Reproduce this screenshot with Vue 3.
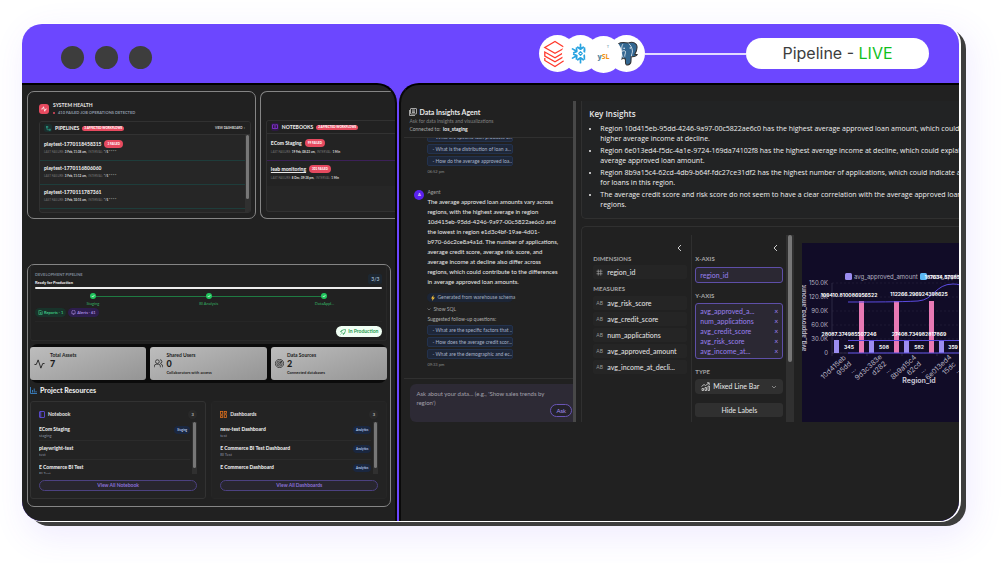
<script setup>
import { ref } from 'vue'

const pipelines = [
    { name: 'playtest-1770118458315', badge: '3 FAILED', last: '3 Feb, 11:38 am,', interval: '*/5 * * * *' },
    { name: 'playtest-1770116806060', last: '3 Feb, 11:12 am,', interval: '*/5 * * * *' },
    { name: 'playtest-1770111787361', last: '3 Feb, 10:15 am,', interval: '*/5 * * * *' }
]

const notebookJobs = [
    { name: 'ECom Staging', badge: '99 FAILED', last: '19 Feb, 08:23 am,', interval: '1 Min' },
    { name: 'leab monitoring', badge: '301 FAILED', last: '8 Dec, 09:38 pm,', interval: '1 Min', linked: true }
]

const steps = ['Staging', 'BI Analysis', 'DataAppl...']

const resources = [
    {
        kind: 'notebook',
        title: 'Notebook',
        count: 3,
        items: [
            { name: 'ECom Staging', note: 'staging', tag: 'Staging' },
            { name: 'playwright-test', note: 'test' },
            { name: 'E Commerce BI Test', note: 'BI Test' }
        ]
    },
    {
        kind: 'dashboard',
        title: 'Dashboards',
        count: 3,
        items: [
            { name: 'new-test Dashboard', note: 'test', tag: 'Analytics' },
            { name: 'E Commerce BI Test Dashboard', note: 'BI Test', tag: 'Analytics' },
            { name: 'E Commerce Dashboard', tag: 'Analytics' }
        ]
    }
]

const answer = [
    'The average approved loan amounts vary across',
    'regions, with the highest average in region',
    '10d415eb-95dd-4246-9a97-00c5822ae6c0 and',
    'the lowest in region e1d3c4bf-19ae-4d01-',
    'b970-66c2ce8a4a1d. The number of applications,',
    'average credit score, average risk score, and',
    'average income at decline also differ across',
    'regions, which could contribute to the differences',
    'in average approved loan amounts.'
]

const earlier = [
    '- What are specific loan products off...',
    '- What is the distribution of loan a...',
    '- How do the average approved loa...'
]

const followUps = [
    '- What are the specific factors that ...',
    '- How does the average credit scor...',
    '- What are the demographic and ec...'
]

const insights = [
    ['Region 10d415eb-95dd-4246-9a97-00c5822ae6c0 has the highest average approved loan amount, which could explain the', 'higher average income at decline.'],
    ['Region 6e013ed4-f5dc-4a1e-9724-169da74102f8 has the highest average income at decline, which could explain the', 'average approved loan amount.'],
    ['Region 8b9a15c4-62cd-4db9-b64f-fdc27ce31df2 has the highest number of applications, which could indicate a demand', 'for loans in this region.'],
    ['The average credit score and risk score do not seem to have a clear correlation with the average approved loan amount', 'regions.']
]

const measures = ['avg_risk_score', 'avg_credit_score', 'num_applications', 'avg_approved_amount', 'avg_income_at_decli...']
const yAxis = ref(['avg_approved_a...', 'num_applications', 'avg_credit_score', 'avg_risk_score', 'avg_income_at...'])
const chartType = ref('Mixed Line Bar')
const labelsShown = ref(true)
const question = ref('')

function removeMeasure(index) {
    yAxis.value.splice(index, 1)
}

const ticks = ['150.0K', '120.0K', '90.0K', '60.0K', '30.0K', '0'].map((label, i) => ({ label, y: 40 + i * 14 }))

const groups = [
    { x: 30, id: '10d415eb', sub: '95dd' },
    { x: 65, id: '9d3c383e', sub: 'd282' },
    { x: 100, id: '8b9a15c4', sub: '62cd' },
    { x: 135, id: '6e013ed4', sub: '15dc' }
]

const pointLabels = [
    { x: 47, y: 54, text: '109410.810086956522' },
    { x: 117, y: 53, text: '112266.296924398625' },
    { x: 151, y: 36, text: '187634.579854123456' },
    { x: 47, y: 93, text: '28087.374985507246' },
    { x: 117, y: 93, text: '27408.734982817869' },
    { x: 47, y: 106, text: '345' },
    { x: 82, y: 106, text: '508' },
    { x: 117, y: 106, text: '582' },
    { x: 151, y: 106, text: '359' }
]
</script>

<template>
    <main class="stage">
        <div class="frame">
            <header class="topbar">
                <div class="dots"><i></i><i></i><i></i></div>
                <div class="sources">
                    <span class="source">
                        <svg width="24" height="30" viewBox="0 0 24 30" fill="none" stroke="#ff3a2d" stroke-width="1.3">
                            <path d="M21.500 8.500 12 2.500 1.800 8.500 12 14.300 22 8.800v4L12 18.700 1.800 13v4L12 22.800 22 17v4L12 27.500 1.800 21.500v-2.500" />
                        </svg>
                    </span>
                    <span class="source">
                        <svg width="21" height="21" viewBox="0 0 42 42" fill="none" stroke="#29a3e0" stroke-width="3.400" stroke-linecap="round" stroke-linejoin="round">
                            <path d="m21 17.500 3.500 3.500-3.500 3.500-3.500-3.500z" stroke-width="2.400" />
                            <path v-for="n in 6" :key="n" :transform="`rotate(${n * 60} 21 21)`" d="M21 2.500V12M15.500 8.500 21 12.500l5.500-4" />
                        </svg>
                    </span>
                    <span class="source low">
                        <span class="mysql"><b>y</b><em>SL</em></span>
                        <small>T</small>
                    </span>
                    <span class="source">
                        <svg width="25" height="25" viewBox="0 0 24 24">
                            <path d="M4 2.500C1 4 1 8 2.500 12c1 3 2.500 5.500 4 5.500 1 0 1.700-.6 2.500-1.400.3.800 1 1.200 2 1.200v3.200c0 2 1 2.700 2.500 2.500 2-.3 2.700-1.500 2.800-3.500l.2-4.500c2.500.2 5-.5 5.800-2-.7-.2-1.700.1-2.300-.2C21.500 10 23 6 21.500 3.500 19.500.8 16 1 13.700 2 10.500 1.200 7 1 4 2.500z" fill="#336791" stroke="#333" stroke-width="1" />
                            <path d="M8.500 3C7 5 7.500 8 7.300 11c-.2 2 .7 3.500 1.700 5M14 2.300c2 1.500 3.500 4.500 3.700 7.200.2 2-1 3-1 5.300M7.500 10c1.500-1 3-.8 3.500 0 .3 2-1 3-.6 5" fill="none" stroke="#fff" stroke-width=".7" />
                            <path d="M9 7h1.500M15 6.700h1.400" stroke="#fff" stroke-width="1" />
                        </svg>
                    </span>
                    <span class="wire"></span>
                    <p class="status">Pipeline - <strong>LIVE</strong></p>
                </div>
            </header>

            <div class="panes">
                <section class="pane left">
                    <div class="cards">
                        <article class="outline health">
                            <div class="health-head">
                                <span class="pulse">
                                    <svg width="6" height="6" viewBox="0 0 24 24" fill="none" stroke="#fff" stroke-width="3"><path d="M1 12h5l4-9 5 18 4-9h4" /></svg>
                                </span>
                                <div>
                                    <h2>SYSTEM HEALTH</h2>
                                    <p><i></i>410 FAILED JOB OPERATIONS DETECTED</p>
                                </div>
                            </div>
                            <div class="jobs teal">
                                <div class="jobs-head">
                                    <span class="jobs-icon">
                                        <svg width="5" height="5" viewBox="0 0 24 24" fill="none" stroke="#2c9c86" stroke-width="3"><rect x="2" y="2" width="7" height="7" /><rect x="15" y="15" width="7" height="7" /><path d="M5 9v9h10" /></svg>
                                    </span>
                                    <h3>PIPELINES</h3>
                                    <span class="alert">3 AFFECTED WORKFLOWS</span>
                                    <a href="#dashboard">VIEW DASHBOARD&nbsp; ›</a>
                                </div>
                                <div class="jobs-body">
                                    <ul>
                                        <li v-for="job in pipelines" :key="job.name">
                                            <div class="job-name"><b>{{ job.name }}</b><span v-if="job.badge" class="pill">{{ job.badge }}</span></div>
                                            <p>LAST FAILURE: <b>{{ job.last }}</b> &nbsp;INTERVAL: <b>{{ job.interval }}</b></p>
                                        </li>
                                        <li class="peek"><span class="pill"></span></li>
                                    </ul>
                                    <div class="track"><i class="thumb-l"></i></div>
                                </div>
                            </div>
                        </article>

                        <article class="outline books">
                            <div class="jobs violet">
                                <div class="jobs-head">
                                    <span class="jobs-icon">
                                        <svg width="6" height="6" viewBox="0 0 24 24" fill="none" stroke="#9333ea" stroke-width="3"><path d="M12 5v15M2 3h7l3 2 3-2h7v15h-7l-3 2-3-2H2z" /></svg>
                                    </span>
                                    <h3>NOTEBOOKS</h3>
                                    <span class="alert">2 AFFECTED WORKFLOWS</span>
                                </div>
                                <ul>
                                    <li v-for="job in notebookJobs" :key="job.name">
                                        <div class="job-name"><b :class="{ linked: job.linked }">{{ job.name }}</b><span class="pill">{{ job.badge }}</span></div>
                                        <p>LAST FAILURE: <b>{{ job.last }}</b> &nbsp;INTERVAL: <b>{{ job.interval }}</b></p>
                                    </li>
                                </ul>
                            </div>
                        </article>
                    </div>

                    <article class="outline board">
                        <div class="stage-card">
                            <div class="stage-head">
                                <div>
                                    <p>DEVELOPMENT PIPELINE</p>
                                    <h2>Ready for Production</h2>
                                </div>
                                <span>3/3</span>
                            </div>
                            <div class="bar"></div>
                            <ol class="steps">
                                <li v-for="step in steps" :key="step">
                                    <svg width="6" height="6" viewBox="0 0 12 12"><circle cx="6" cy="6" r="6" fill="#22c55e" /><path d="m3.500 6 2 2 3.200-3.800" fill="none" stroke="#fff" stroke-width="1.300" /></svg>
                                    <span>{{ step }}</span>
                                </li>
                            </ol>
                            <div class="chips">
                                <span class="chip green">
                                    <svg width="5" height="5" viewBox="0 0 24 24" fill="none" stroke="currentColor" stroke-width="3"><path d="M4 2h11l5 5v15H4zM9 12h7M9 17h7" /></svg>Reports · 1
                                </span>
                                <span class="chip purple">
                                    <svg width="5" height="5" viewBox="0 0 24 24" fill="none" stroke="currentColor" stroke-width="3"><path d="M4 18V9a8 8 0 0 1 16 0v9zM9 22h6" /></svg>Alerts · 61
                                </span>
                            </div>
                            <div class="prod-row">
                                <button type="button" class="prod">
                                    <svg width="6" height="6" viewBox="0 0 24 24" fill="none" stroke="currentColor" stroke-width="2.500"><path d="M9 15 5 11c2-6 8-9 17-9 0 9-3 15-9 17zM5 11H2l4-5h4M13 19v3l5-4v-4M2 22l4-4" /></svg>In Production
                                </button>
                            </div>
                        </div>

                        <div class="stats">
                            <div class="stat">
                                <svg width="11" height="12" viewBox="0 0 24 24" fill="none" stroke="#222" stroke-width="2"><path d="M1 13h4L9 3l6 18 4-10h4" /></svg>
                                <div><h4>Total Assets</h4><strong>7</strong><p>&nbsp;</p></div>
                            </div>
                            <div class="stat">
                                <svg width="9" height="9" viewBox="0 0 24 24" fill="none" stroke="#222" stroke-width="2"><circle cx="9" cy="7" r="5" /><path d="M1 22v-3a5 5 0 0 1 5-5h6a5 5 0 0 1 5 5v3M16 2a5 5 0 0 1 0 10M23 22v-3a5 5 0 0 0-4-5" /></svg>
                                <div><h4>Shared Users</h4><strong>0</strong><p>Collaborators with access</p></div>
                            </div>
                            <div class="stat">
                                <svg width="9" height="9" viewBox="0 0 24 24" fill="none" stroke="#222" stroke-width="2"><circle cx="12" cy="12" r="11" /><circle cx="12" cy="12" r="7" /><circle cx="12" cy="12" r="3" /><path d="m12 12 8-8" /></svg>
                                <div><h4>Data Sources</h4><strong>2</strong><p>Connected databases</p></div>
                            </div>
                        </div>

                        <h2 class="section-title">
                            <svg width="7" height="7" viewBox="0 0 14 14" fill="none" stroke="#3b82c4" stroke-width="1.800"><path d="M1 0v13h13M5 11V6M8.500 11V3M12 11V8" /></svg>Project Resources
                        </h2>

                        <div class="resources">
                            <div v-for="group in resources" :key="group.kind" class="resource" :class="group.kind">
                                <div class="resource-head">
                                    <svg v-if="group.kind === 'notebook'" width="6" height="7" viewBox="0 0 12 14" fill="none" stroke="#6450f0" stroke-width="1.600"><rect x="1" y="1" width="10" height="12" rx="1" /><path d="M3.500 1v12" /></svg>
                                    <svg v-else width="7" height="7" viewBox="0 0 14 14" fill="none" stroke="#e0701c" stroke-width="1.600"><rect x="1" y="1" width="4.500" height="5.500" /><rect x="8.500" y="1" width="4.500" height="3.500" /><rect x="1" y="9.500" width="4.500" height="3.500" /><rect x="8.500" y="7.500" width="4.500" height="5.500" /></svg>
                                    <h3>{{ group.title }}</h3>
                                    <span>{{ group.count }}</span>
                                </div>
                                <div class="resource-body">
                                    <ul>
                                        <li v-for="item in group.items" :key="item.name">
                                            <div><b>{{ item.name }}</b><p v-if="item.note">{{ item.note }}</p></div>
                                            <span v-if="item.tag" class="tag">{{ item.tag }}</span>
                                        </li>
                                    </ul>
                                    <div class="track"><i class="thumb-l"></i></div>
                                </div>
                                <button type="button" class="view-all">View All {{ group.title }}</button>
                            </div>
                        </div>
                    </article>
                </section>

                <section class="pane right">
                    <aside class="agent">
                        <div class="agent-main">
                            <div class="agent-head">
                                <h2>
                                    <svg width="8" height="8" viewBox="0 0 16 16" fill="none" stroke="#ddd" stroke-width="1.400"><rect x="3" y="1" width="12" height="11" rx="1" /><path d="M1 4v11h11M6 4h6M6 6.500h6M6 9h6" /></svg>Data Insights Agent
                                </h2>
                                <p>Ask for data insights and visualizations</p>
                                <p class="conn">Connected to: &nbsp;<b>los_staging</b></p>
                            </div>
                            <div class="thread">
                                <div class="older">
                                    <button v-for="item in earlier" :key="item" type="button" class="prompt">{{ item }}</button>
                                    <time>06:52 pm</time>
                                </div>
                                <div class="message">
                                    <span class="avatar">A</span>
                                    <div>
                                        <h3>Agent</h3>
                                        <p class="answer"><template v-for="line in answer" :key="line">{{ line }}<br></template></p>
                                        <span class="schema"><svg width="4" height="6" viewBox="0 0 8 12"><path d="M5 0 0 7h3L2 12l6-7H4.500z" fill="#f5c03a" /></svg>Generated from warehouse schema</span>
                                        <button type="button" class="sql"><svg width="4" height="3" viewBox="0 0 8 6" fill="none" stroke="currentColor"><path d="m1 1 3 3 3-3" /></svg>Show SQL</button>
                                        <p class="suggest">Suggested follow-up questions:</p>
                                        <button v-for="item in followUps" :key="item" type="button" class="prompt">{{ item }}</button>
                                        <time>09:33 pm</time>
                                    </div>
                                </div>
                            </div>
                            <form class="ask" @submit.prevent>
                                <textarea v-model="question" rows="2" aria-label="Ask about your data" placeholder="Ask about your data... (e.g., 'Show sales trends by region')"></textarea>
                                <button type="submit">Ask</button>
                            </form>
                        </div>
                        <div class="divider"></div>
                    </aside>

                    <div class="report">
                        <section class="insights">
                            <h2>Key Insights</h2>
                            <ul>
                                <li v-for="item in insights" :key="item[0]">{{ item[0] }}<br>{{ item[1] }}</li>
                            </ul>
                        </section>

                        <section class="builder">
                            <div class="fields">
                                <button type="button" class="collapse" aria-label="Collapse fields"><svg width="5" height="8" viewBox="0 0 5 8" fill="none" stroke="#ccc"><path d="M4 1 1 4l3 3" /></svg></button>
                                <h3>DIMENSIONS</h3>
                                <div class="field">
                                    <svg width="7" height="7" viewBox="0 0 14 14" fill="none" stroke="#aaa" stroke-width="1.300"><path d="M4.500 1v12M9.500 1v12M1 4.500h12M1 9.500h12" /></svg>region_id
                                </div>
                                <h3 class="gap">MEASURES</h3>
                                <div v-for="name in measures" :key="name" class="field"><small>AB</small>{{ name }}</div>
                            </div>
                            <div class="config">
                                <button type="button" class="collapse" aria-label="Collapse settings"><svg width="5" height="8" viewBox="0 0 5 8" fill="none" stroke="#ccc"><path d="M4 1 1 4l3 3" /></svg></button>
                                <h3>X-AXIS</h3>
                                <div class="axis single">region_id</div>
                                <h3 class="gap">Y-AXIS</h3>
                                <ul class="axis">
                                    <li v-for="(name, i) in yAxis" :key="name">{{ name }}<button type="button" :aria-label="'Remove ' + name" @click="removeMeasure(i)">×</button></li>
                                </ul>
                                <h3 class="gap"><label for="chart-type">TYPE</label></h3>
                                <div class="type">
                                    <svg width="9" height="9" viewBox="0 0 18 18" fill="none" stroke="#ddd" stroke-width="1.500"><path d="M2 17v-4h3v4zM8 17v-6h3v6zM14 17V8h3v9zM1 9l5-4 3 2 7-5M12 1.500h4.500V6" /></svg>
                                    <select id="chart-type" v-model="chartType"><option>Mixed Line Bar</option><option>Bar</option><option>Line</option></select>
                                    <svg width="6" height="4" viewBox="0 0 6 4" fill="none" stroke="#999" stroke-width=".8"><path d="m1 1 2 2 2-2" /></svg>
                                </div>
                                <button type="button" class="toggle" @click="labelsShown = !labelsShown">{{ labelsShown ? 'Hide Labels' : 'Show Labels' }}</button>
                            </div>
                            <div class="track tall"><i class="thumb-l"></i></div>
                            <div class="chart">
                                <svg width="200" height="179" viewBox="0 0 200 179" class="plot">
                                    <rect x="43" y="30" width="7" height="7" rx="1.500" fill="#9b8cf0" />
                                    <text x="52" y="36" class="legend">avg_approved_amount</text>
                                    <rect x="118" y="30" width="7" height="7" rx="1.500" fill="#5bb8f5" />
                                    <text x="127" y="36" class="legend">num_applications</text>
                                    <g v-for="tick in ticks" :key="tick.label">
                                        <path :d="`M30 ${tick.y}h170`" class="grid" />
                                        <text x="26" :y="tick.y + 2" class="tick" text-anchor="end">{{ tick.label }}</text>
                                    </g>
                                    <path d="M30 40v70h170M30 110v3M65 110v3M100 110v3M135 110v3" class="axis-line" />
                                    <text transform="translate(4 75) rotate(-90)" text-anchor="middle" class="y-title">avg_approved_amount</text>
                                    <g v-for="group in groups" :key="group.id">
                                        <rect :x="group.x + 2" y="97" width="5" height="13" fill="#9b8cf0" />
                                        <rect :x="group.x + 27" y="58" width="5" height="52" fill="#e879b4" />
                                        <g :transform="`translate(${group.x + 3} 126) rotate(-43)`" text-anchor="middle" class="cat">
                                            <text x="0" y="0">{{ group.id }}</text>
                                            <text x="7" y="8">{{ group.sub }}</text>
                                            <text x="12" y="15">...</text>
                                        </g>
                                    </g>
                                    <path d="M46 59c24 0 52 0 70-1 16-1 17-17 35-17 20 0 30 20 49 40M46 97.500h154M46 110h154" class="line" />
                                    <g v-if="labelsShown" class="point" text-anchor="middle">
                                        <text v-for="label in pointLabels" :key="label.text" :x="label.x" :y="label.y">{{ label.text }}</text>
                                    </g>
                                    <text x="117" y="140" text-anchor="middle" class="x-title">Region_id</text>
                                </svg>
                            </div>
                        </section>
                    </div>
                </section>
            </div>
        </div>
    </main>
</template>

<style>
body {
    margin: 0;
    background: #fff;
}
</style>

<style scoped>
* {
    box-sizing: border-box;
}

h2, h3, h4, p, ul, ol {
    margin: 0;
    padding: 0;
    font-weight: inherit;
    font-size: inherit;
}

ul, ol {
    list-style: none;
}

button, textarea, select {
    margin: 0;
    padding: 0;
    border: 0;
    background: none;
    color: inherit;
    font: inherit;
    cursor: pointer;
}

svg {
    display: block;
    flex: none;
}

.stage {
    padding: 24px 45px 42px 22px;
    font-family: Lato, "Liberation Sans", sans-serif;
    color: #e8e8e8;
    overflow: hidden;
}

.frame {
    border-radius: 20px;
    background: #6c47ff;
    box-shadow: 1px 0 0 1px #fff, 7px 5px 0 0 #3d3d3d, 8px 12px 34px 4px rgba(108, 71, 255, 0.1);
    overflow: hidden;
}

.topbar {
    display: flex;
    align-items: center;
    justify-content: space-between;
    height: 59px;
    padding: 0 30px 0 39px;
}

.dots {
    display: flex;
    gap: 11px;
    padding-top: 7px;
}

.dots i {
    width: 23px;
    height: 23px;
    border-radius: 50%;
    background: #3d3d3d;
}

.sources {
    display: flex;
    align-items: center;
}

.source {
    display: grid;
    place-items: center;
    width: 37px;
    height: 37px;
    border-radius: 50%;
    background: #fff;
    margin-right: -14px;
}

.source:nth-child(4) {
    margin-right: 0;
}

.source:nth-child(1) svg {
    margin-right: 6px;
}

.source.low {
    position: relative;
    margin-top: 2px;
}

.mysql {
    font: 700 7px/8px "Open Sans", sans-serif;
    padding-top: 5px;
}

.mysql b {
    color: #5d87a1;
}

.mysql em {
    font-style: normal;
    color: #f29111;
}

.source small {
    position: absolute;
    top: 9px;
    right: 13px;
    font-size: 4px;
    line-height: 4px;
    color: #5d87a1;
}

.wire {
    width: 101px;
    height: 2px;
    background: #e2dbff;
}

.status {
    width: 183px;
    border-radius: 16px;
    background: #fff;
    color: #3d3d3d;
    font: 400 16px/31px Inter, sans-serif;
    text-align: center;
}

.status strong {
    font-weight: 400;
    color: #10c01c;
}

.panes {
    display: grid;
    grid-template-columns: minmax(0, 375fr) minmax(0, 559fr);
    gap: 2px;
}

.pane {
    background: #212121;
    border-top: 2px solid #000;
    overflow: hidden;
}

.left {
    display: flex;
    flex-direction: column;
    gap: 45px;
    padding: 6px 4px 14px 5px;
    border-right: 2px solid #0a0a0a;
    border-radius: 0 20px 0 0;
}

.right {
    display: flex;
    align-items: flex-start;
    padding: 16px 0 0 3px;
    border-left: 2px solid #0a0a0a;
    border-radius: 20px 0 0 0;
}

.cards {
    display: grid;
    grid-template-columns: 228fr 137fr;
    gap: 4px;
    margin-right: -6px;
}

.outline {
    min-width: 0;
    border: 1px solid #858585;
    border-radius: 7px;
}

.health {
    padding: 10px 4px 5px 11px;
}

.books {
    padding: 28px 0 5px 5px;
    border-right: 0;
    border-radius: 7px 0 0 7px;
}

.health-head {
    display: flex;
    align-items: center;
    gap: 4px;
    height: 14px;
    margin-bottom: 5px;
}

.pulse {
    display: grid;
    place-items: center;
    width: 10px;
    height: 10px;
    border-radius: 3px;
    background: #e64a5f;
}

.health-head h2 {
    font-size: 5px;
    line-height: 7px;
    font-weight: 700;
}

.health-head p {
    display: flex;
    align-items: center;
    gap: 3px;
    font-size: 4px;
    line-height: 7px;
    font-weight: 700;
    color: #8f99a8;
}

.health-head i {
    width: 2px;
    height: 2px;
    border-radius: 50%;
    background: #e64a5f;
}

.jobs {
    height: 92px;
    border: 1px solid #313131;
    border-radius: 3px;
    background: #262626;
    overflow: hidden;
    white-space: nowrap;
}

.violet {
    border-right: 0;
    border-radius: 3px 0 0 3px;
}

.jobs-head {
    display: flex;
    align-items: center;
    gap: 3px;
    height: 13px;
    padding: 0 5px 0 4px;
    background: #212121;
    border-bottom: 1px solid #323232;
}

.jobs-icon {
    display: grid;
    place-items: center;
    width: 8px;
    height: 8px;
    border-radius: 2px;
    background: #1a2f2e;
}

.violet .jobs-icon {
    background: #2d1a42;
}

.jobs-head h3 {
    font-size: 5px;
    line-height: 8px;
    font-weight: 900;
}

.alert {
    padding: 0 2px;
    border-radius: 3px;
    background: #e64a5f;
    color: #fff;
    font-size: 3px;
    line-height: 5px;
    font-weight: 900;
}

.jobs-head a {
    margin-left: auto;
    color: #ddd;
    font-size: 3px;
    line-height: 8px;
    font-weight: 700;
    text-decoration: none;
}

.jobs-body {
    display: flex;
}

.jobs-body ul {
    flex: 1;
}

.jobs li {
    padding: 3px 4px 4px;
    border-bottom: 1px solid #1e3d3b;
}

.jobs li:first-child {
    padding-top: 5px;
}

.jobs.violet li {
    padding-top: 4px;
    border-color: #3c2058;
    background: #232323;
}

.jobs.violet li:first-child {
    padding-top: 5px;
}

.jobs.violet li:last-child {
    border-color: #262626;
}

.job-name {
    display: flex;
    align-items: center;
    gap: 3px;
    min-height: 8px;
    font-size: 5px;
    line-height: 8px;
}

.job-name b {
    font-weight: 900;
}

.jobs li p {
    padding-top: 1px;
    font-size: 3px;
    line-height: 7px;
    color: #777;
}

.jobs.violet li p {
    padding-top: 2px;
}

.jobs li p b {
    color: #ddd;
}

.linked {
    text-decoration: underline;
}

.pill {
    padding: 0 3px;
    border-radius: 4px;
    background: #e64a5f;
    color: #fff;
    font-size: 3px;
    line-height: 8px;
    font-weight: 900;
}

.jobs li.peek {
    padding: 3px 0 0 73px;
    line-height: 0;
    border: 0;
}

.peek .pill {
    display: inline-block;
    width: 13px;
    height: 8px;
}

.track {
    width: 5px;
    padding: 0 1px;
    background: #303030;
}

.thumb-l {
    display: block;
    height: 75%;
    border-radius: 2px;
    background: #777;
}

.board {
    padding: 0 3px 7px 2px;
}

.stage-card {
    padding: 6px 4px 3px;
    border: 1px solid #282828;
    border-top: 0;
    border-radius: 3px;
}

.stage-head {
    display: flex;
    justify-content: space-between;
    align-items: center;
    margin-bottom: 1px;
}

.stage-head p {
    font-size: 4px;
    line-height: 8px;
    font-weight: 700;
    color: #7d8797;
}

.stage-head h2 {
    font-size: 4px;
    line-height: 7px;
    font-weight: 900;
}

.stage-head span {
    padding: 0 3px;
    border-radius: 2px;
    background: #1d2731;
    color: #9db4c8;
    font-size: 5px;
    line-height: 10px;
    font-weight: 700;
}

.bar {
    height: 2px;
    border-radius: 1px;
    background: #eee;
}

.steps {
    display: grid;
    grid-template-columns: repeat(3, 1fr);
    margin-top: 4px;
}

.steps li {
    position: relative;
    display: flex;
    flex-direction: column;
    align-items: center;
    gap: 1px;
    color: #35b465;
    font-size: 4px;
    line-height: 7px;
}

.steps svg {
    position: relative;
    z-index: 1;
}

.steps li + li::before {
    content: "";
    position: absolute;
    top: 3px;
    left: -50%;
    width: 100%;
    height: 1px;
    background: #1f7a42;
}

.chips {
    display: flex;
    gap: 2px;
    margin-top: 1px;
    padding-bottom: 4px;
    border-bottom: 1px solid #262626;
}

.chip {
    display: flex;
    align-items: center;
    gap: 1px;
    padding: 0 3px;
    border-radius: 5px;
    font-size: 4px;
    line-height: 9px;
    font-weight: 700;
}

.green {
    background: #18332a;
    color: #3fc583;
}

.purple {
    background: #2d1d4d;
    color: #a98be0;
}

.prod-row {
    display: flex;
    justify-content: flex-end;
    padding-top: 4px;
}

.prod {
    display: flex;
    align-items: center;
    gap: 2px;
    padding: 0 4px;
    border-radius: 6px;
    background: #f0fff4;
    color: #1f9a4c;
    font-size: 5px;
    line-height: 11px;
    font-weight: 700;
}

.stats {
    display: grid;
    grid-template-columns: repeat(3, 1fr);
    gap: 4px;
    margin-top: 3px;
    padding: 3px 0;
    border-radius: 8px;
    background: #0b0b0b;
}

.stat {
    display: flex;
    align-items: center;
    gap: 3px;
    height: 33px;
    padding: 0 4px;
    border-radius: 3px;
    background: linear-gradient(160deg, #bdbdbd, #949494);
    color: #1c1c1c;
    white-space: nowrap;
}

.stat:first-child {
    gap: 5px;
}

.stat h4 {
    font-size: 5px;
    line-height: 8px;
    font-weight: 700;
}

.stat strong {
    display: block;
    font-size: 9px;
    line-height: 10px;
    font-weight: 900;
}

.stat p {
    font-size: 4px;
    line-height: 7px;
    font-weight: 700;
}

.section-title {
    display: flex;
    align-items: center;
    gap: 3px;
    margin: 2px 0 5px;
    font-size: 7px;
    line-height: 11px;
    font-weight: 900;
}

.resources {
    display: grid;
    grid-template-columns: repeat(2, minmax(0, 1fr));
    gap: 5px;
}

.resource {
    padding: 8px 8px 7px;
    border: 1px solid #262626;
    border-radius: 3px;
    background: #232323;
}

.resource.notebook {
    border-color: #323232;
}

.resource-head {
    display: flex;
    align-items: center;
    gap: 3px;
    height: 9px;
    margin-bottom: 3px;
}

.resource-head h3 {
    font-size: 5px;
    line-height: 9px;
    font-weight: 700;
}

.resource-head span {
    width: 9px;
    margin-left: auto;
    border-radius: 50%;
    background: #292929;
    font-size: 4px;
    line-height: 9px;
    text-align: center;
}

.resource-body {
    display: flex;
    height: 52px;
    overflow: hidden;
}

.resource-body ul {
    flex: 1;
    min-width: 0;
    padding-right: 2px;
}

.resource-body li {
    display: flex;
    justify-content: space-between;
    align-items: flex-start;
    padding: 4px 0 1px;
    border-bottom: 1px solid #2b2b2b;
    white-space: nowrap;
}

.resource-body li:last-child {
    border: 0;
}

.resource-body b {
    display: block;
    font-size: 5px;
    line-height: 7px;
    font-weight: 900;
}

.resource-body p {
    font-size: 4px;
    line-height: 6px;
    color: #8d96a3;
}

.resource-body .thumb-l {
    height: 46px;
}

.tag {
    padding: 0 3px;
    border-radius: 4px;
    background: #1a2740;
    color: #b9cdf0;
    font-size: 3px;
    line-height: 8px;
    font-weight: 700;
}

.view-all {
    display: block;
    width: 100%;
    margin-top: 6px;
    border: 1px solid #4c4180;
    border-radius: 6px;
    background: #28262e;
    color: #8b72d8;
    font-size: 5px;
    line-height: 9px;
    font-weight: 700;
}

.agent {
    display: flex;
    flex: 0 0 31%;
    min-width: 0;
}

.agent-main {
    flex: 1;
    min-width: 0;
    white-space: nowrap;
}

.divider {
    width: 3px;
    background: #484848;
}

.agent-head {
    padding: 6px 0 3px 5px;
    border-bottom: 1px solid #303030;
}

.agent-head h2 {
    display: flex;
    align-items: center;
    gap: 2px;
    font-size: 7px;
    line-height: 10px;
    font-weight: 700;
}

.agent-head p {
    font-size: 5px;
    line-height: 8px;
    color: #828282;
}

.agent-head .conn {
    color: #aaa;
    line-height: 9px;
}

.conn b {
    color: #f0f0f0;
}

.thread {
    height: 241px;
    overflow: hidden;
    border-bottom: 1px solid #303030;
}

.older {
    margin-top: -6px;
    padding-left: 23px;
}

.prompt {
    display: block;
    width: 86px;
    margin-bottom: 2px;
    padding: 0 4px;
    border: 1px solid #23324d;
    border-radius: 2px;
    background: #1e2739;
    color: #a9b4c8;
    font-size: 5px;
    line-height: 8px;
    text-align: left;
    overflow: hidden;
}

.thread time {
    display: block;
    font-size: 4px;
    line-height: 8px;
    color: #8a8a8a;
}

.message {
    display: flex;
    gap: 3px;
    padding: 12px 0 0 10px;
}

.avatar {
    width: 10px;
    height: 10px;
    margin-top: 2px;
    border-radius: 50%;
    background: #5b21f0;
    font-size: 4px;
    line-height: 10px;
    font-weight: 700;
    text-align: center;
}

.message h3 {
    font-size: 5px;
    line-height: 9px;
    color: #a0a0a0;
}

.answer {
    font-size: 6px;
    line-height: 10px;
    color: #ececec;
}

.schema {
    display: flex;
    align-items: center;
    gap: 2px;
    width: 86px;
    margin-top: 6px;
    padding: 0 4px;
    border-radius: 5px;
    background: #1c2536;
    color: #a3adbf;
    font-size: 5px;
    line-height: 9px;
}

.sql {
    display: flex;
    align-items: center;
    gap: 2px;
    margin: 2px 0 1px;
    color: #a6a6a6;
    font-size: 5px;
    line-height: 10px;
}

.suggest {
    margin-bottom: 1px;
    font-size: 5px;
    line-height: 9px;
    color: #b0b0b0;
}

.ask {
    position: relative;
    display: flex;
    margin: 5px 0 0 6px;
    padding: 5px 0 6px 6px;
    border-radius: 6px 0 0 6px;
    background: #2d2a35;
}

.ask textarea {
    display: block;
    width: 142px;
    height: 27px;
    resize: none;
    outline: 0;
    overflow: hidden;
    font-size: 6px;
    line-height: 9px;
    cursor: text;
}

.ask textarea::placeholder {
    color: #a3a0ab;
}

.ask button {
    position: absolute;
    right: 1px;
    bottom: 5px;
    width: 22px;
    border: 1px solid #6a55b5;
    border-radius: 7px;
    background: #24222b;
    color: #a58ff0;
    font-size: 6px;
    line-height: 11px;
}

.report {
    flex: 1;
    min-width: 0;
    padding-left: 5px;
}

.insights {
    padding: 6px 0 6px 7px;
    border: 1px solid #303030;
    border-width: 0 0 1px 1px;
    border-radius: 0 0 0 5px;
    background: #222324;
    font-family: "Open Sans", sans-serif;
    white-space: nowrap;
    overflow: hidden;
}

.insights h2 {
    margin-bottom: 4px;
    font-size: 8px;
    line-height: 13px;
    font-weight: 600;
}

.insights ul {
    padding-left: 11px;
    list-style: disc;
}

.insights li {
    margin-bottom: 2px;
    font-size: 7px;
    line-height: 10px;
    color: #f0f0f0;
}

.builder {
    display: flex;
    align-items: stretch;
    margin-top: 7px;
    padding-top: 8px;
    border: 1px solid #303030;
    border-width: 1px 0 0 1px;
    border-radius: 5px 0 0 0;
    overflow: hidden;
}

.fields {
    flex: 0 0 110px;
    padding: 9px 4px 0 11px;
    border-right: 1px solid #2f2f2f;
}

.config {
    flex: 0 0 94px;
    padding: 9px 3px 4px;
}

.collapse {
    display: block;
    margin: 0 5px 2px auto;
}

.builder h3 {
    font-size: 6px;
    line-height: 10px;
    font-weight: 700;
    color: #a5a5a5;
}

.fields h3:first-of-type {
    margin-bottom: 1px;
}

.config h3:first-of-type {
    margin-bottom: 3px;
}

.builder .gap {
    margin: 8px 0 2px;
}

.fields .gap {
    margin: 5px 0 2px;
}

.field {
    display: flex;
    align-items: center;
    gap: 4px;
    margin-bottom: 2px;
    padding-left: 3px;
    border-radius: 2px;
    background: #252525;
    font-size: 7px;
    line-height: 14px;
    white-space: nowrap;
}

.field small {
    width: 7px;
    font-size: 5px;
    color: #999;
}

.axis {
    padding: 2px 4px;
    border: 1px solid #5e4fa8;
    border-radius: 3px;
    background: #2b2833;
    color: #9a80f0;
    font-size: 7px;
    line-height: 10px;
}

.axis li {
    display: flex;
    justify-content: space-between;
}

.axis button {
    line-height: 10px;
}

.type {
    display: flex;
    align-items: center;
    gap: 3px;
    padding: 0 6px;
    border-radius: 4px;
    background: #303030;
}

.type select {
    flex: 1;
    min-width: 0;
    height: 15px;
    appearance: none;
    font-size: 7px;
    line-height: 15px;
    outline: 0;
}

.toggle {
    width: 100%;
    margin-top: 9px;
    border-radius: 3px;
    background: #303030;
    font-size: 7px;
    line-height: 14px;
}

.tall {
    flex: none;
    width: 8px;
    padding: 0 2px;
}

.tall .thumb-l {
    height: 68%;
}

.chart {
    flex: 1;
    min-width: 0;
    margin: 8px 0 0 8px;
    background: #110c27;
    overflow: hidden;
}

.plot {
    font-family: Inter, sans-serif;
}

.legend,
.tick {
    font-size: 6px;
    fill: #b4b1c0;
}

.grid {
    stroke: #2c2742;
    stroke-width: 0.5;
    stroke-dasharray: 2 2;
}

.axis-line {
    fill: none;
    stroke: #4a4660;
    stroke-width: 0.5;
}

.y-title {
    font-size: 6px;
    font-weight: 700;
    fill: #b4b1c0;
}

.cat {
    font-size: 7px;
    fill: #b4b1c0;
}

.line {
    fill: none;
    stroke: #5b4be0;
}

.point {
    font-size: 5px;
    font-weight: 700;
    fill: #fff;
}

.x-title {
    font-size: 7px;
    font-weight: 700;
    fill: #c4c1d0;
}
</style>
